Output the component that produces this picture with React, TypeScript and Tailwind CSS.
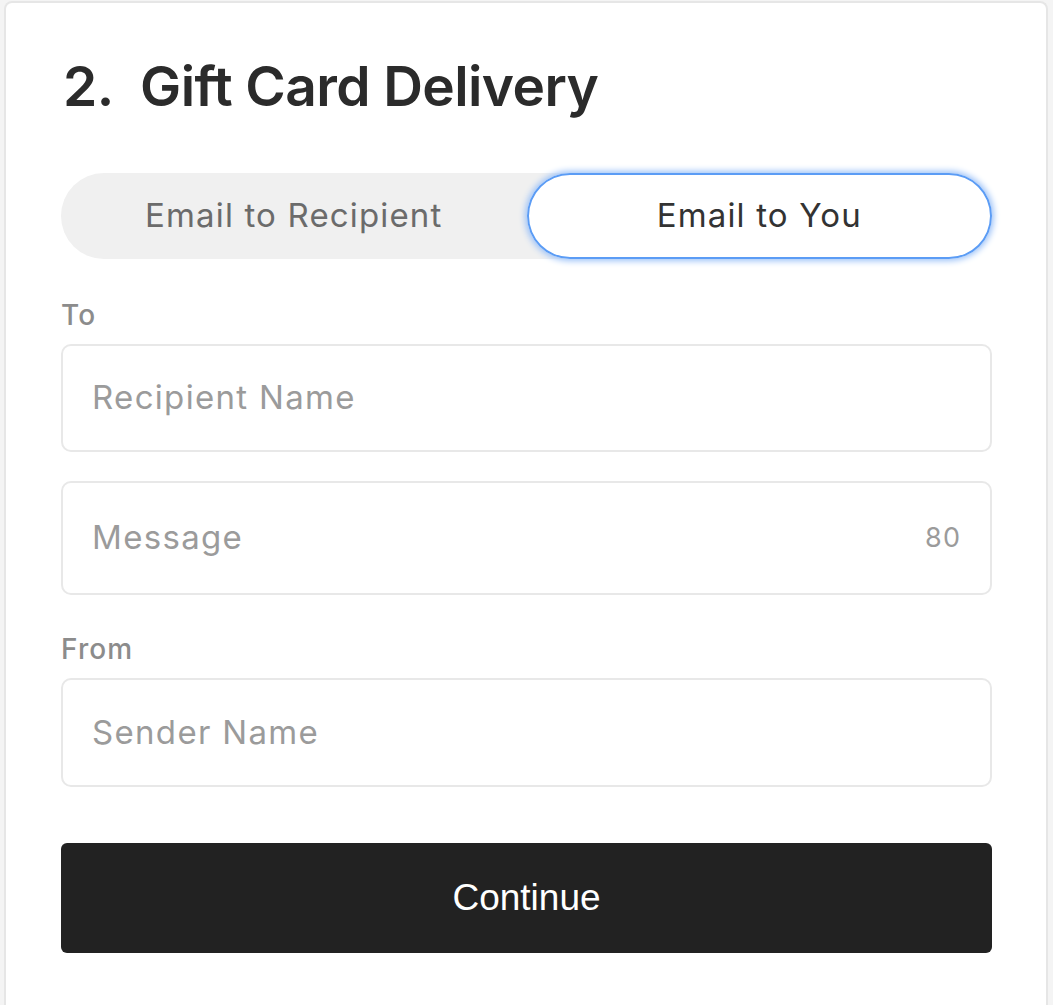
import { useState } from "react";

export default function App() {
  const [mode, setMode] = useState<"recipient" | "you">("you");

  return (
    <div className="min-h-screen bg-[#f4f4f4] pl-[4px] pr-[5px] pt-[1px]" style={{ fontFamily: "Inter, 'Noto Sans', sans-serif" }}>
      <div className="min-h-[1010px] rounded-t-lg border-2 border-b-0 border-[#e6e6e6] bg-white pl-[55px] pr-[54px]">
        <h2 className="pt-[48px] pl-[2px] text-[55px] font-semibold leading-[70px] tracking-[-0.6px] text-[#2b2b2b]">
          2.&nbsp; Gift Card Delivery
        </h2>

        <div className="mt-[52px] flex h-[86px] rounded-full bg-[#f0f0f0]">
          <button
            onClick={() => setMode("recipient")}
            className={
              mode === "recipient"
                ? "flex-1 rounded-full bg-white text-[33px] tracking-[0.035em] text-[#333] shadow-[inset_0_0_0_2px_#5b9cf5,0_0_6px_2px_#9cc2f8]"
                : "flex-1 rounded-full text-[33px] tracking-[0.035em] text-[#6b6b6b]"
            }
          >
            Email to Recipient
          </button>
          <button
            onClick={() => setMode("you")}
            className={
              mode === "you"
                ? "flex-1 rounded-full bg-white text-[33px] tracking-[0.035em] text-[#333] shadow-[inset_0_0_0_2px_#5b9cf5,0_0_6px_2px_#9cc2f8]"
                : "flex-1 rounded-full text-[33px] tracking-[0.035em] text-[#6b6b6b]"
            }
          >
            Email to You
          </button>
        </div>

        <label className="mt-[40px] block text-[28px] font-medium leading-[32px] tracking-[0.04em] text-[#8c8c8c]">To</label>
        <div className="mt-[13px] flex h-[108px] items-center rounded-[10px] border-2 border-[#e8e8e8] px-[29px]">
          <input
            placeholder="Recipient Name"
            className="w-full bg-transparent text-[33px] tracking-[0.04em] text-[#333] outline-none placeholder:text-[#9b9b9b]"
          />
        </div>

        <div className="mt-[29px] flex h-[114px] items-center rounded-[10px] border-2 border-[#e8e8e8] px-[29px]">
          <input
            placeholder="Message"
            className="w-full bg-transparent text-[33px] tracking-[0.04em] text-[#333] outline-none placeholder:text-[#9b9b9b]"
          />
          <span className="text-[27px] tracking-[0.04em] text-[#9b9b9b]">80</span>
        </div>

        <label className="mt-[38px] block text-[28px] font-medium leading-[32px] tracking-[0.04em] text-[#8c8c8c]">From</label>
        <div className="mt-[13px] flex h-[109px] items-center rounded-[10px] border-2 border-[#e8e8e8] px-[29px]">
          <input
            placeholder="Sender Name"
            className="w-full bg-transparent text-[33px] tracking-[0.04em] text-[#333] outline-none placeholder:text-[#9b9b9b]"
          />
        </div>

        <button
          className="mt-[56px] flex h-[110px] w-full items-center justify-center rounded-md bg-[#222222] text-[37px] text-white"
          style={{ fontFamily: "'Liberation Sans', Arial, sans-serif" }}
        >
          Continue
        </button>
      </div>
    </div>
  );
}
